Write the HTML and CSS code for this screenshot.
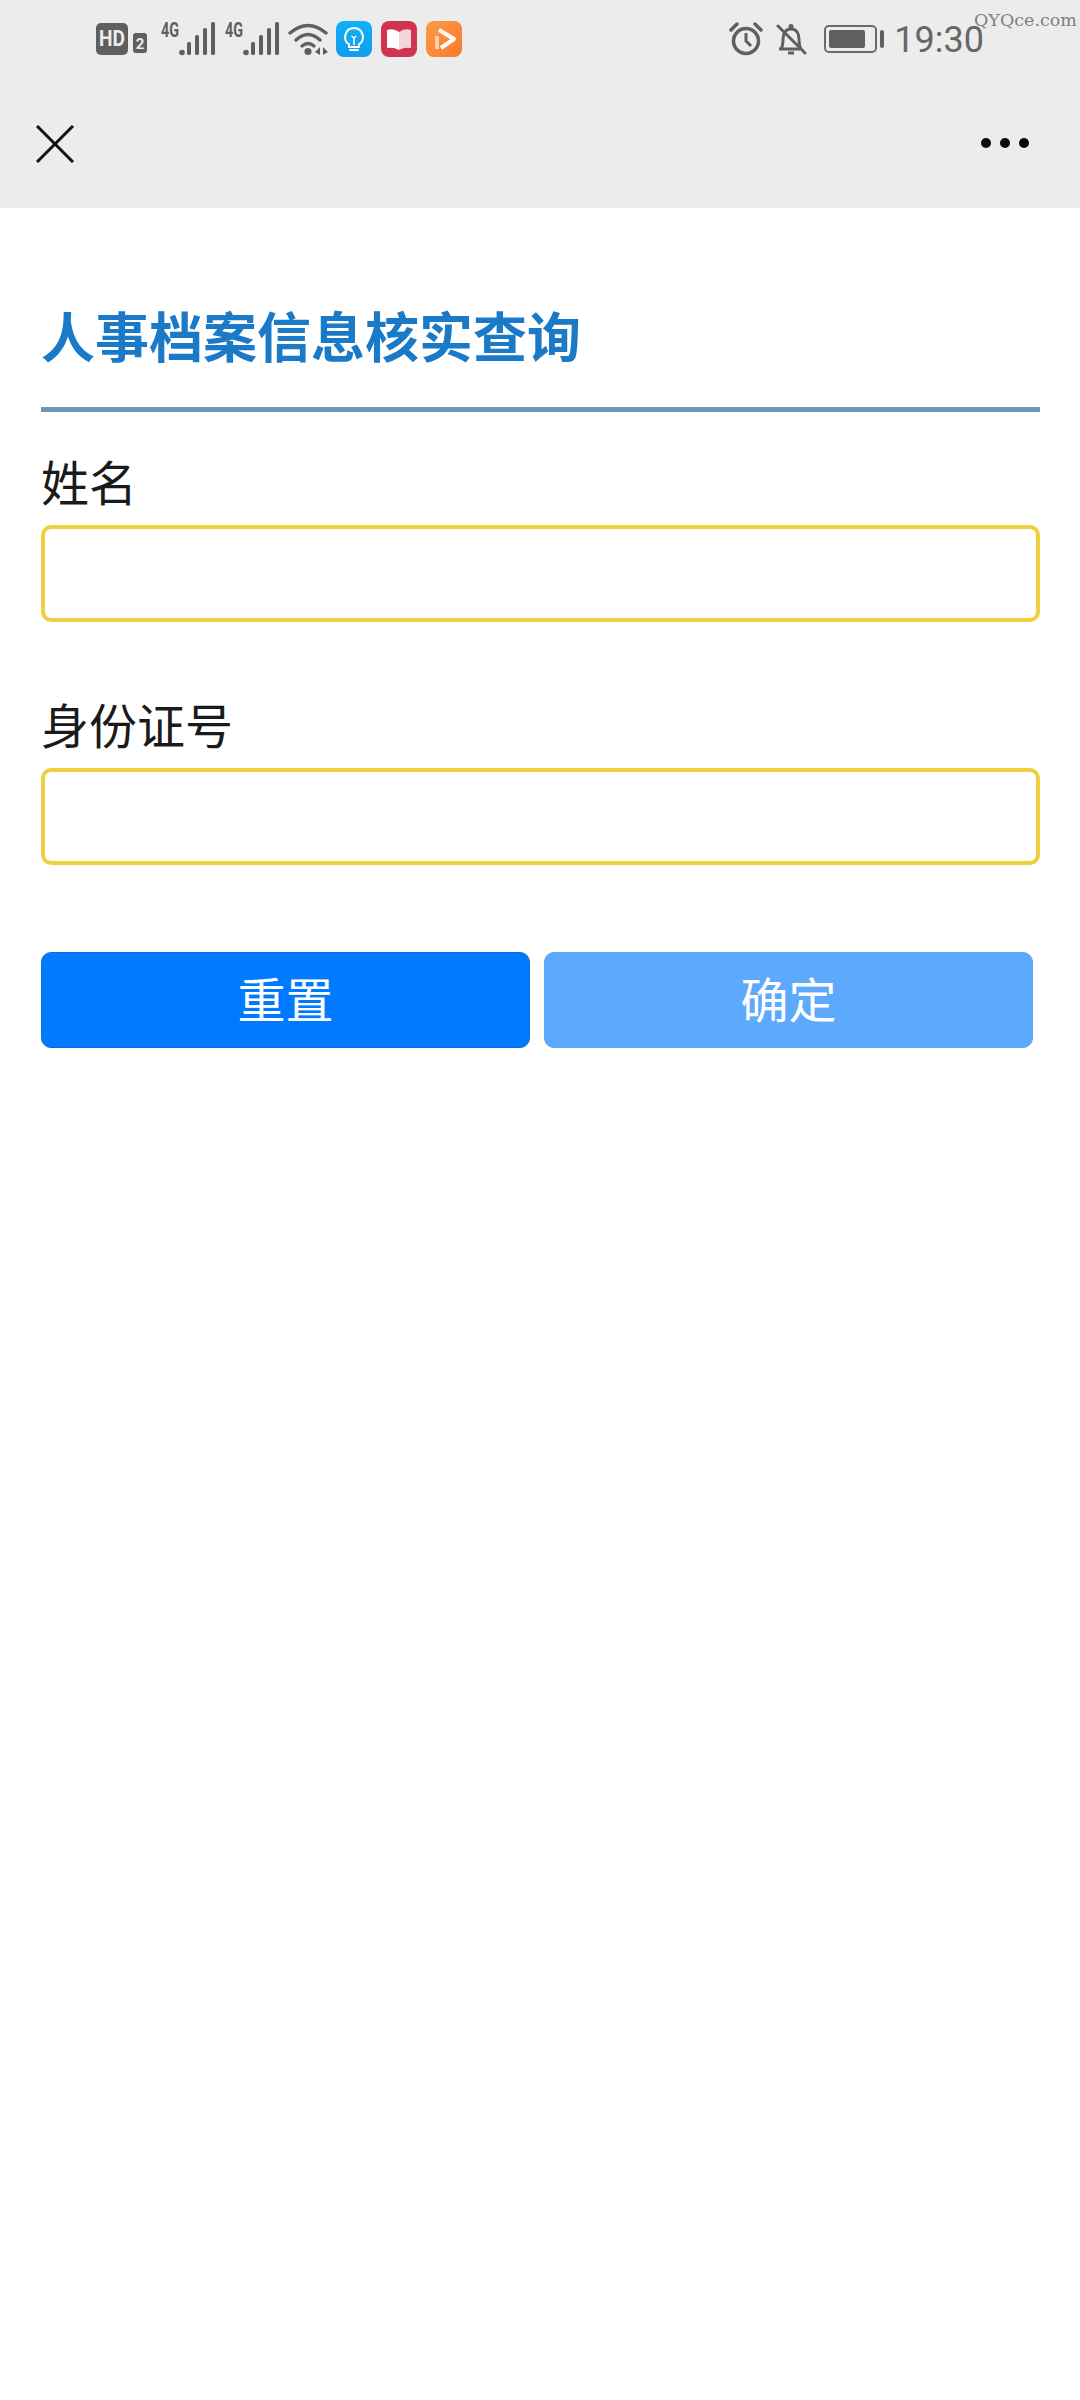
FILE: index.html
```html
<!DOCTYPE html>
<html lang="zh-CN">
<head>
<meta charset="utf-8">
<title>人事档案信息核实查询</title>
<link rel="stylesheet" href="styles.css">
</head>
<body>
<header class="chrome">
  <div class="status">
    <div class="status-left">
      <svg class="ico-hd" width="51" height="32" viewBox="0 0 51 32"><rect x="0" y="0" width="32" height="32" rx="5" fill="#5f5f5f"/><text x="16" y="23" class="t-hd" text-anchor="middle" textLength="26" lengthAdjust="spacingAndGlyphs">HD</text><rect x="37" y="10" width="14" height="20" rx="3" fill="#5f5f5f"/><text x="44" y="26" class="t-two" text-anchor="middle">2</text></svg>
      <svg class="ico-sig" width="54" height="42" viewBox="0 -4 54 42"><text x="0" y="15" class="t-4g" textLength="18" lengthAdjust="spacingAndGlyphs">4G</text><circle cx="21" cy="30.500" r="2.800" fill="#5f5f5f"/><rect x="26" y="20" width="4" height="13" rx="1.500" fill="#5f5f5f"/><rect x="34" y="13" width="4" height="20" rx="1.500" fill="#5f5f5f"/><rect x="42" y="6" width="4" height="27" rx="1.500" fill="#5f5f5f"/><rect x="50" y="0" width="4" height="33" rx="1.500" fill="#5f5f5f"/></svg>
      <svg class="ico-sig" width="54" height="42" viewBox="0 -4 54 42"><text x="0" y="15" class="t-4g" textLength="18" lengthAdjust="spacingAndGlyphs">4G</text><circle cx="21" cy="30.500" r="2.800" fill="#5f5f5f"/><rect x="26" y="20" width="4" height="13" rx="1.500" fill="#5f5f5f"/><rect x="34" y="13" width="4" height="20" rx="1.500" fill="#5f5f5f"/><rect x="42" y="6" width="4" height="27" rx="1.500" fill="#5f5f5f"/><rect x="50" y="0" width="4" height="33" rx="1.500" fill="#5f5f5f"/></svg>
      <svg class="ico-wifi" width="41" height="34" viewBox="0 0 41 34"><g fill="none" stroke="#5f5f5f" stroke-width="3.400" stroke-linecap="round"><path d="M2 11 Q20 -4 38 11"/><path d="M8 18 Q20 7 32 18"/><path d="M14 24 Q20 19 26 24"/></g><circle cx="20" cy="29.500" r="3.600" fill="#5f5f5f"/><path d="M27 30 L32 25 V33 Z M35 25 L40 30 L35 33 Z" fill="#5f5f5f"/></svg>
      <svg class="ico-app" width="36" height="36" viewBox="0 0 36 36"><defs><linearGradient id="g1" x1="0" y1="0" x2="0" y2="1"><stop offset="0" stop-color="#0fb2f5"/><stop offset="1" stop-color="#109cf0"/></linearGradient></defs><rect width="36" height="36" rx="8" fill="url(#g1)"/><path d="M18 7a9 9 0 0 0-5 16.400V26h10v-2.600A9 9 0 0 0 18 7Z" fill="none" stroke="#fff" stroke-width="2"/><path d="M14 29h8" stroke="#fff" stroke-width="2" stroke-linecap="round"/><path d="M18 24v-7l-2.500-2M18 17l2.500-2" fill="none" stroke="#fff" stroke-width="1.500"/></svg>
      <svg class="ico-app" width="36" height="36" viewBox="0 0 36 36"><rect width="36" height="36" rx="8" fill="#cf3450"/><path d="M6 9 Q13 7 18 11 V29 Q13 26 6 27 Z" fill="#fff"/><path d="M30 9 Q23 7 18 11 V29 Q23 26 30 27 Z" fill="#f6d5da"/></svg>
      <svg class="ico-app" width="36" height="36" viewBox="0 0 36 36"><defs><linearGradient id="g3" x1="0" y1="0" x2="1" y2="1"><stop offset="0" stop-color="#fd9a47"/><stop offset="1" stop-color="#fb7a2c"/></linearGradient></defs><rect width="36" height="36" rx="8" fill="url(#g3)"/><path d="M13 9 L28 18 L15 27" fill="none" stroke="#fff" stroke-width="4" stroke-linejoin="round"/><path d="M11 15 V28" stroke="#fcd3ae" stroke-width="4"/></svg>
    </div>
    <div class="status-right">
      <svg class="ico-alarm" width="34" height="34" viewBox="0 0 34 34"><circle cx="17" cy="19" r="12.500" fill="none" stroke="#5f5f5f" stroke-width="3.500"/><path d="M17 11v8l5 5" fill="none" stroke="#5f5f5f" stroke-width="3"/><path d="M2 8 L8 2 M32 8 L26 2" stroke="#5f5f5f" stroke-width="3.500" stroke-linecap="round"/></svg>
      <svg class="ico-bell" width="31" height="33" viewBox="0 0 31 33"><path d="M3 26h21M5 26c2-3 2-6 2-10 0-6 3-10 8-10s8 4 8 10c0 4 0 7 2 10" fill="none" stroke="#5f5f5f" stroke-width="3"/><path d="M2 3 L29 30" stroke="#5f5f5f" stroke-width="3" stroke-linecap="round"/><path d="M12 30h6" stroke="#5f5f5f" stroke-width="3"/><circle cx="15" cy="3.500" r="2.500" fill="#5f5f5f"/></svg>
      <div class="battery"><div class="battery-body"><div class="battery-fill"></div></div><div class="battery-nub"></div></div>
      <span class="time">19:30</span>
    </div>
    <span class="watermark">QYQce.com</span>
  </div>
  <nav class="nav">
    <svg width="38" height="38" viewBox="0 0 38 38"><path d="M1 1 L37 37 M37 1 L1 37" stroke="#111" stroke-width="3"/></svg>
    <div class="dots"><i class="dot"></i><i class="dot"></i><i class="dot"></i></div>
  </nav>
</header>
<main class="page">
  <h1 class="title">人事档案信息核实查询</h1>
  <form class="form">
    <div class="field">
      <label class="label">姓名</label>
      <input class="input" type="text">
    </div>
    <div class="field">
      <label class="label">身份证号</label>
      <input class="input" type="text">
    </div>
    <div class="actions">
      <button class="btn" type="button">重置</button>
      <button class="btn btn-soft" type="button">确定</button>
    </div>
  </form>
</main>
</body>
</html>
```
FILE: styles.css
```css
* { box-sizing: border-box; }
html, body { margin: 0; padding: 0; background: #fff; }
body { width: 1080px; height: 2400px; font-family: "Liberation Sans", "Noto Sans CJK SC", sans-serif; color: #1a1a1a; overflow: hidden; }

.chrome { background: #ececec; height: 208px; }
.status { position: relative; height: 78px; display: flex; justify-content: space-between; align-items: center; padding: 0 96px 0 96px; }
.status-left, .status-right { display: flex; align-items: center; }
.status-left { gap: 10px; }
.ico-hd { margin-right: 4px; }
.ico-wifi { margin-left: -1px; margin-right: -3px; }
.ico-app { margin-right: -1px; }
.status-right { gap: 13px; }
.ico-bell { margin-right: 4px; }
.battery { display: flex; align-items: center; gap: 3px; }
.battery-body { width: 53px; height: 28px; border: 2px solid #6a6a6a; border-radius: 5px; padding: 3px; }
.battery-fill { width: 36px; height: 100%; background: #5f5f5f; border-radius: 2px; }
.battery-nub { width: 4px; height: 18px; background: #5f5f5f; border-radius: 2px; }
.time { font: 36px/1 Roboto, sans-serif; color: #666; margin-left: -3px; padding-top: 2px; }
.watermark { position: absolute; top: 10px; left: 974px; font: 17.5px/1.2 "DejaVu Serif", serif; color: #808080; white-space: nowrap; }

.t-hd { font: 700 22px Roboto, sans-serif; fill: #ececec; }
.t-two { font: 700 15px Roboto, sans-serif; fill: #ececec; }
.t-4g { font: 700 20px Roboto, sans-serif; fill: #5f5f5f; }

.nav { height: 130px; display: flex; justify-content: space-between; align-items: flex-start; padding: 47px 51px 0 36px; }
.dots { display: flex; gap: 9px; margin-top: 13px; }
.dot { display: block; width: 10px; height: 10px; border-radius: 50%; background: #0a0a0a; }

.page { padding: 0 40px 0 41px; }
.title { margin: 0; padding: 101px 0 38px; font-size: 54px; line-height: 60px; font-weight: 700; color: #1a7ac8; border-bottom: 5px solid #6699bb; }
.form { display: flex; flex-direction: column; }
.field { display: flex; flex-direction: column; margin-bottom: 33px; }
.label { font-size: 48px; line-height: 72px; margin-top: 37px; margin-bottom: 4px; color: #1a1a1a; }
.input { display: block; width: 100%; height: 97px; background: #fff; border: 4px solid #eecf3f; border-radius: 10px; outline: none; }
.actions { display: flex; gap: 14px; margin-top: 54px; padding-right: 7px; }
.btn { flex: 1; height: 96px; font: 400 48px/1 "Liberation Sans", "Noto Sans CJK SC", sans-serif; color: #fff; background: #007bff; border: 1px solid #0b6fd8; border-radius: 10px; padding: 3px 0 0; }
.btn-soft { background: #5ca9fe; border-color: #5ca5f2; }
```
